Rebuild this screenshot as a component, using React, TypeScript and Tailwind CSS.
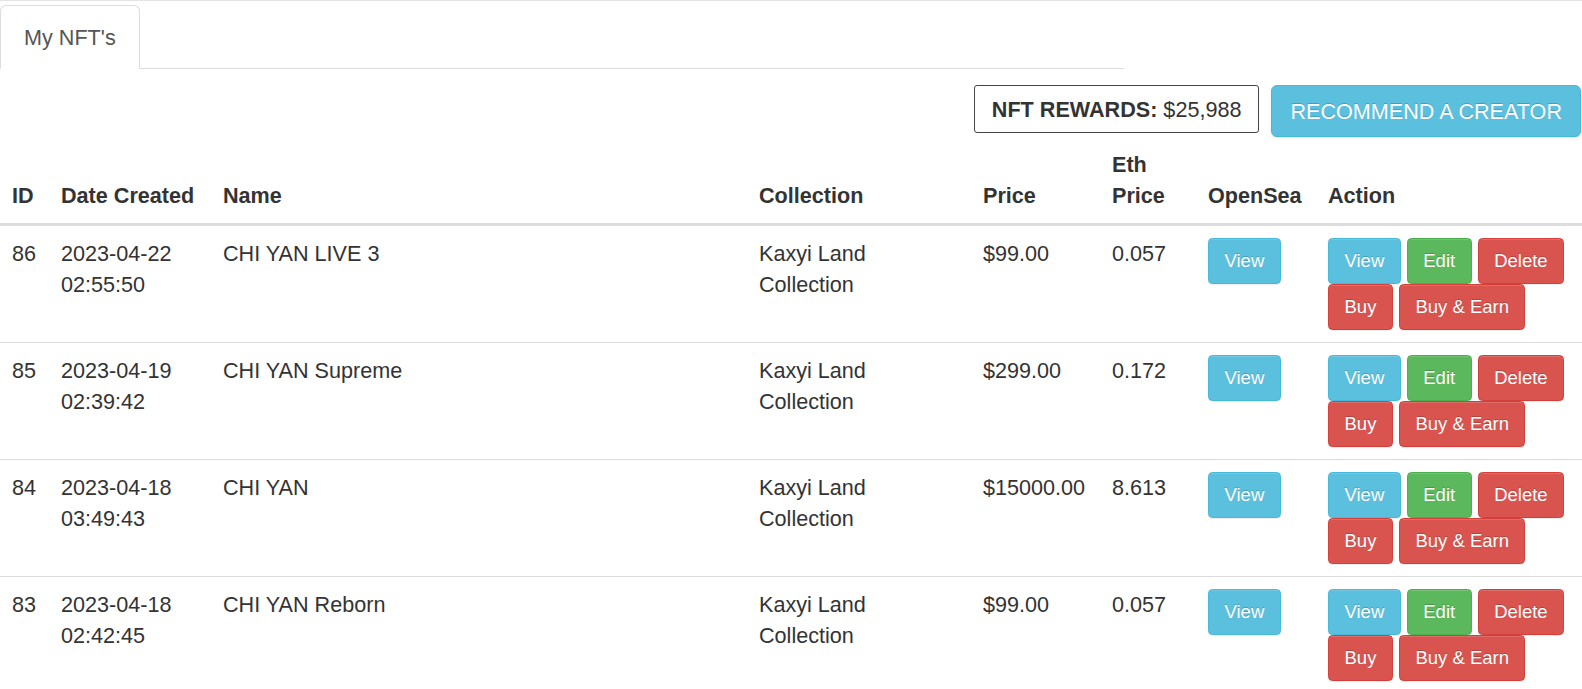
import React from "react";

type Row = {
  id: number;
  date: string;
  time: string;
  name: string;
  price: string;
  eth: string;
};

const rows: Row[] = [
  { id: 86, date: "2023-04-22", time: "02:55:50", name: "CHI YAN LIVE 3", price: "$99.00", eth: "0.057" },
  { id: 85, date: "2023-04-19", time: "02:39:42", name: "CHI YAN Supreme", price: "$299.00", eth: "0.172" },
  { id: 84, date: "2023-04-18", time: "03:49:43", name: "CHI YAN", price: "$15000.00", eth: "8.613" },
  { id: 83, date: "2023-04-18", time: "02:42:45", name: "CHI YAN Reborn", price: "$99.00", eth: "0.057" },
];

const btnBase =
  "inline-block text-white text-[18.5px] leading-[28px] px-[15.5px] py-[8px] rounded-[4.5px] border [text-shadow:0_-1px_0_rgba(0,0,0,0.2)] shadow-[inset_0_1px_0_rgba(255,255,255,0.15),0_1px_1px_rgba(0,0,0,0.075)] whitespace-nowrap";

function Btn({ kind, children }: { kind: "info" | "success" | "danger"; children: React.ReactNode }) {
  const color =
    kind === "info"
      ? "bg-[#5bc0de] border-[#46b8da]"
      : kind === "success"
      ? "bg-[#5cb85c] border-[#4cae4c]"
      : "bg-[#d9534f] border-[#d43f3a]";
  return <span className={`${btnBase} ${color}`}>{children}</span>;
}

export default function App() {
  return (
    <div className="border-t border-[#e5e5e5] bg-white text-[#333] text-[21.6px] leading-[31px] font-['Liberation_Sans',Arial,sans-serif]">
      <ul className="flex w-[1124px] mt-[4px] border-b border-[#ddd]">
        <li className="-mb-px">
          <a className="block px-[23px] py-[15.5px] text-[#555] bg-white border border-[#ddd] border-b-transparent rounded-t-[6px]">
            My NFT's
          </a>
        </li>
      </ul>

      <div className="flex justify-end items-start gap-[12px] mt-[16px] pr-px">
        <div className="border border-[#444] rounded-[3px] px-[17px] py-[7.5px]">
          <b className="font-bold">NFT REWARDS:</b> $25,988
        </div>
        <span className="inline-block bg-[#5bc0de] border border-[#46b8da] text-white px-[18px] py-[9.5px] rounded-[6px] whitespace-nowrap [text-shadow:0_-1px_0_rgba(0,0,0,0.2)] shadow-[0_1px_2px_rgba(0,0,0,0.12)]">
          RECOMMEND A CREATOR
        </span>
      </div>

      <table className="w-full table-fixed border-collapse">
        <colgroup>
          <col className="w-[49px]" />
          <col className="w-[162px]" />
          <col className="w-[536px]" />
          <col className="w-[224px]" />
          <col className="w-[129px]" />
          <col className="w-[96px]" />
          <col className="w-[120px]" />
          <col />
        </colgroup>
        <thead>
          <tr className="text-left">
            {["ID", "Date Created", "Name", "Collection", "Price", "Eth Price", "OpenSea", "Action"].map((h) => (
              <th key={h} className="font-bold align-bottom p-[12px] border-b-[3px] border-[#ddd]">
                {h}
              </th>
            ))}
          </tr>
        </thead>
        <tbody>
          {rows.map((r) => (
            <tr key={r.id} className="border-t border-[#ddd] align-top">
              <td className="p-[12px]">{r.id}</td>
              <td className="p-[12px]">
                {r.date}
                <br />
                {r.time}
              </td>
              <td className="p-[12px]">{r.name}</td>
              <td className="p-[12px]">
                Kaxyi Land
                <br />
                Collection
              </td>
              <td className="p-[12px]">{r.price}</td>
              <td className="p-[12px]">{r.eth}</td>
              <td className="p-[12px]">
                <div className="flex">
                  <Btn kind="info">View</Btn>
                </div>
              </td>
              <td className="p-[12px]">
                <div className="flex flex-wrap gap-x-[6px]">
                  <Btn kind="info">View</Btn>
                  <Btn kind="success">Edit</Btn>
                  <Btn kind="danger">Delete</Btn>
                  <Btn kind="danger">Buy</Btn>
                  <Btn kind="danger">Buy &amp; Earn</Btn>
                </div>
              </td>
            </tr>
          ))}
        </tbody>
      </table>
    </div>
  );
}
